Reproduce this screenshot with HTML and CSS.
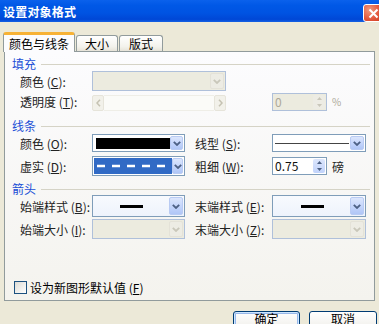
FILE: index.html
```html
<!DOCTYPE html>
<html lang="zh-CN">
<head>
    <meta charset="UTF-8">
    <meta name="viewport" content="width=device-width, initial-scale=1.0">
    <title>设置对象格式</title>
    <link rel="stylesheet" href="styles.css">
</head>
<body>
    <div class="window">
        <div class="titlebar">
            <span class="title">设置对象格式</span>
            <span class="close-btn">
                <svg width="11" height="11" viewBox="0 0 11 11"><path d="M1.5 1.5 L9.5 9.5 M9.5 1.5 L1.5 9.5" stroke="#fff" stroke-width="2"/></svg>
            </span>
        </div>

        <div class="client">
            <div class="tabs">
                <div class="tab active">颜色与线条</div>
                <div class="tab">大小</div>
                <div class="tab">版式</div>
            </div>

            <div class="panel">
                <!-- 填充 -->
                <div class="group-head"><span>填充</span></div>
                <div class="row row-fill-color">
                    <span class="lbl">颜色 (<u>C</u>):</span>
                    <div class="combo wide disabled">
                        <span class="field"></span>
                        <span class="drop"><svg width="8" height="5" viewBox="0 0 8 5"><path d="M0.8 0.8 L4 4 L7.2 0.8" fill="none" stroke-width="1.8"/></svg></span>
                    </div>
                </div>
                <div class="row row-alpha">
                    <span class="lbl">透明度 (<u>T</u>):</span>
                    <div class="slider">
                        <span class="sbtn"><svg width="5" height="8" viewBox="0 0 5 8"><path d="M4 0.8 L1 4 L4 7.2" fill="none" stroke-width="1.5"/></svg></span>
                        <span class="track"></span>
                        <span class="sbtn"><svg width="5" height="8" viewBox="0 0 5 8"><path d="M1 0.8 L4 4 L1 7.2" fill="none" stroke-width="1.5"/></svg></span>
                    </div>
                    <div class="spin disabled">
                        <span class="spin-val">0</span>
                        <span class="spin-btns">
                            <svg width="5" height="3" viewBox="0 0 5 3"><path d="M0 3 L2.5 0 L5 3Z"/></svg>
                            <svg width="5" height="3" viewBox="0 0 5 3"><path d="M0 0 L2.5 3 L5 0Z"/></svg>
                        </span>
                    </div>
                    <span class="unit">%</span>
                </div>

                <!-- 线条 -->
                <div class="group-head head-line"><span>线条</span></div>
                <div class="row row-line-color">
                    <span class="lbl">颜色 (<u>O</u>):</span>
                    <div class="combo narrow">
                        <span class="field"><span class="swatch"></span></span>
                        <span class="drop"><svg width="8" height="5" viewBox="0 0 8 5"><path d="M0.8 0.8 L4 4 L7.2 0.8" fill="none" stroke-width="1.8"/></svg></span>
                    </div>
                    <span class="lbl lbl-right">线型 (<u>S</u>):</span>
                    <div class="combo right">
                        <span class="field"><span class="thin-line"></span></span>
                        <span class="drop"><svg width="8" height="5" viewBox="0 0 8 5"><path d="M0.8 0.8 L4 4 L7.2 0.8" fill="none" stroke-width="1.8"/></svg></span>
                    </div>
                </div>
                <div class="row row-dash">
                    <span class="lbl">虚实 (<u>D</u>):</span>
                    <div class="combo narrow">
                        <span class="field selected">
                            <svg width="76" height="4" viewBox="0 0 76 4"><line x1="1" y1="2" x2="76" y2="2" stroke="#fff" stroke-width="2.5" stroke-dasharray="8 7"/></svg>
                        </span>
                        <span class="drop"><svg width="8" height="5" viewBox="0 0 8 5"><path d="M0.8 0.8 L4 4 L7.2 0.8" fill="none" stroke-width="1.8"/></svg></span>
                    </div>
                    <span class="lbl lbl-right">粗细 (<u>W</u>):</span>
                    <div class="spin">
                        <span class="spin-val">0.75</span>
                        <span class="spin-btns">
                            <svg width="5" height="3" viewBox="0 0 5 3"><path d="M0 3 L2.5 0 L5 3Z"/></svg>
                            <svg width="5" height="3" viewBox="0 0 5 3"><path d="M0 0 L2.5 3 L5 0Z"/></svg>
                        </span>
                    </div>
                    <span class="unit">磅</span>
                </div>

                <!-- 箭头 -->
                <div class="group-head head-arrow"><span>箭头</span></div>
                <div class="row row-arrow-style">
                    <span class="lbl">始端样式 (<u>B</u>):</span>
                    <div class="combo narrow light">
                        <span class="field"><span class="thick-line"></span></span>
                        <span class="drop"><svg width="8" height="5" viewBox="0 0 8 5"><path d="M0.8 0.8 L4 4 L7.2 0.8" fill="none" stroke-width="1.8"/></svg></span>
                    </div>
                    <span class="lbl lbl-right">末端样式 (<u>E</u>):</span>
                    <div class="combo right light">
                        <span class="field"><span class="thick-line"></span></span>
                        <span class="drop"><svg width="8" height="5" viewBox="0 0 8 5"><path d="M0.8 0.8 L4 4 L7.2 0.8" fill="none" stroke-width="1.8"/></svg></span>
                    </div>
                </div>
                <div class="row row-arrow-size">
                    <span class="lbl">始端大小 (<u>I</u>):</span>
                    <div class="combo narrow disabled">
                        <span class="field"></span>
                        <span class="drop"><svg width="8" height="5" viewBox="0 0 8 5"><path d="M0.8 0.8 L4 4 L7.2 0.8" fill="none" stroke-width="1.8"/></svg></span>
                    </div>
                    <span class="lbl lbl-right">末端大小 (<u>Z</u>):</span>
                    <div class="combo right disabled">
                        <span class="field"></span>
                        <span class="drop"><svg width="8" height="5" viewBox="0 0 8 5"><path d="M0.8 0.8 L4 4 L7.2 0.8" fill="none" stroke-width="1.8"/></svg></span>
                    </div>
                </div>

                <div class="check-row">
                    <span class="checkbox"></span>
                    <span>设为新图形默认值 (<u>F</u>)</span>
                </div>
            </div>

            <div class="buttons">
                <div class="btn default">确定</div>
                <div class="btn">取消</div>
            </div>
        </div>
    </div>
</body>
</html>
```

FILE: styles.css
```css
* {
    box-sizing: border-box;
    margin: 0;
    padding: 0;
}

body {
    font-family: "Noto Sans CJK SC", "Liberation Sans", sans-serif;
    font-size: 12px;
    color: #000;
    background: #ECE9D8;
}

.window {
    width: 379px;
    height: 324px;
    overflow: hidden;
    background: #ECE9D8;
}

.titlebar {
    height: 22px;
    display: flex;
    align-items: center;
    justify-content: space-between;
    padding-left: 3px;
    background: linear-gradient(#0A61EC 0%, #0058E6 25%, #0053E2 60%, #0047D6 88%, #1662E4 100%);
}

.title {
    color: #fff;
    font-weight: bold;
    font-size: 12px;
    line-height: 16px;
    padding-top: 1px;
    letter-spacing: 0.2px;
}

.close-btn {
    width: 21px;
    height: 18px;
    margin-right: -5px;
    margin-top: 4px;
    border: 1px solid #fff;
    border-radius: 3px;
    background: radial-gradient(circle at 30% 30%, #F09A7E, #E2553A 55%, #C8381C);
    display: flex;
    align-items: center;
    justify-content: center;
}

.client {
    padding: 9px 4px 0 4px;
}

/* tabs */
.tabs {
    display: flex;
    align-items: flex-end;
    margin-left: -1px;
    height: 20px;
    position: relative;
    z-index: 1;
}

.tab {
    height: 16px;
    padding: 0 6px;
    line-height: 15px;
    border: 1px solid #919B9C;
    border-bottom: none;
    border-radius: 3px 3px 0 0;
    background: linear-gradient(#FFFFFF, #F3F2EC 70%, #E6E3D8);
    text-align: center;
    margin-left: 1px;
}

.tab:nth-child(2) { width: 42px; }
.tab:nth-child(3) { width: 44px; }

.tab.active {
    width: 72px;
    height: 20px;
    margin-left: 0;
    margin-bottom: -1px;
    line-height: 17px;
    background: #FCFCFE;
    border-top: 3px solid #F7B236;
    padding: 0;
}

.panel {
    width: 371px;
    height: 250px;
    border: 1px solid #919B9C;
    background: linear-gradient(#FCFCFE, #F4F3EE);
    padding-top: 6px;
}

.group-head {
    display: flex;
    align-items: center;
    height: 12px;
    margin-left: 7px;
    margin-right: 4px;
    color: #1B4FD6;
    line-height: 12px;
}

.group-head::after {
    content: "";
    flex: 1;
    height: 1px;
    margin-left: 5px;
    background: #D5D3C6;
}

.head-line { margin-top: 9px; }
.head-arrow { margin-top: 7px; }

.row {
    display: flex;
    align-items: center;
    padding-left: 15px;
}

.row-fill-color { height: 20px; margin-top: 1px; }
.row-alpha { height: 19px; margin-top: 1px; }
.row-line-color { height: 18px; margin-top: 2px; }
.row-dash { height: 20px; margin-top: 4px; }
.row-arrow-style { height: 22px; margin-top: 0; }
.row-arrow-size { height: 20px; margin-top: 2px; }

.lbl {
    width: 72px;
    color: #222;
    white-space: nowrap;
}

.lbl-right {
    width: 77px;
    margin-left: 10px;
}

/* combo boxes */
.combo {
    height: 100%;
    display: flex;
    border: 1px solid #7F9DB9;
    background: #fff;
    padding: 1px;
}

.combo.wide { width: 134px; }
.combo.narrow { width: 93px; }
.combo.right { width: 94px; }

.combo .field {
    flex: 1;
    display: flex;
    align-items: center;
    justify-content: center;
}

.combo .drop {
    width: 14px;
    border-radius: 2px;
    background: linear-gradient(#DCE6FC, #C1D3FB 60%, #B0C6F6);
    border: 1px solid #B9CBF3;
    display: flex;
    align-items: center;
    justify-content: center;
}

.combo .drop path {
    stroke: #4D6185;
}

.combo.disabled {
    background: #ECEBDF;
    border-color: #AFC0DA;
}

.combo.disabled .drop {
    background: #EDECE4;
    border-color: #E4E2D8;
}

.combo.disabled .drop path {
    stroke: #C9C7BA;
}

.combo.light {
    background: linear-gradient(#F8FAFE, #EEF3FC);
}

.swatch {
    width: 74px;
    height: 11px;
    margin-left: 1px;
    background: #000;
}

.row-line-color .combo.narrow .field {
    justify-content: flex-start;
    padding-left: 1px;
}

.thin-line {
    width: 74px;
    height: 1px;
    background: #444;
}

.thick-line {
    width: 23px;
    height: 3px;
    background: #000;
}

.field.selected {
    background: #316AC5;
    justify-content: flex-start;
    padding-left: 2px;
}

/* slider */
.slider {
    width: 134px;
    height: 16px;
    display: flex;
    margin-top: 2px;
}

.slider .sbtn {
    width: 12px;
    background: #F2F1EA;
    border: 1px solid #E6E4DA;
    border-radius: 2px;
    display: flex;
    align-items: center;
    justify-content: center;
}

.slider .sbtn path {
    stroke: #C5C2B2;
}

.slider .track {
    flex: 1;
    background: #FBFBF8;
    border-top: 1px solid #EFEEE7;
    border-bottom: 1px solid #EFEEE7;
}

/* spin boxes */
.spin {
    width: 55px;
    height: 18px;
    display: flex;
    border: 1px solid #7F9DB9;
    background: #fff;
    padding: 1px;
}

.row-alpha .spin { margin-left: 46px; }

.spin-val {
    flex: 1;
    line-height: 14px;
    padding-left: 1px;
    color: #111;
}

.spin-btns {
    width: 12px;
    display: flex;
    flex-direction: column;
    justify-content: space-around;
    align-items: center;
    border-radius: 2px;
    background: linear-gradient(#DCE6FC, #C1D3FB);
}

.spin-btns path { fill: #4D6185; }

.spin.disabled {
    background: #ECEBDF;
    border-color: #AFC0DA;
}

.spin.disabled .spin-val { color: #ACA899; }

.spin.disabled .spin-btns { background: #EDECE4; }

.spin.disabled .spin-btns path { fill: #C9C7BA; }

.unit {
    margin-left: 5px;
    color: #222;
}

.row-alpha .unit { color: #ACA899; font-size: 10px; }

/* checkbox */
.check-row {
    display: flex;
    align-items: center;
    gap: 3px;
    margin-top: 41px;
    padding-left: 9px;
    height: 14px;
}

.checkbox {
    width: 13px;
    height: 13px;
    border: 1px solid #1C5180;
    background: linear-gradient(135deg, #DCDBD5, #FFFFFF);
}

/* buttons */
.buttons {
    display: flex;
    justify-content: flex-end;
    gap: 9px;
    margin-top: 10px;
    margin-right: -2px;
}

.btn {
    width: 68px;
    height: 23px;
    border: 1px solid #003C74;
    border-radius: 3px;
    background: linear-gradient(#FFFFFF, #F0EFEA 80%, #D8D2C6);
    text-align: center;
    line-height: 13px;
}

.btn.default {
    width: 67px;
    box-shadow: inset 0 0 0 1px #CEE7FF, inset 0 0 0 2px #98B8EA;
}
```
